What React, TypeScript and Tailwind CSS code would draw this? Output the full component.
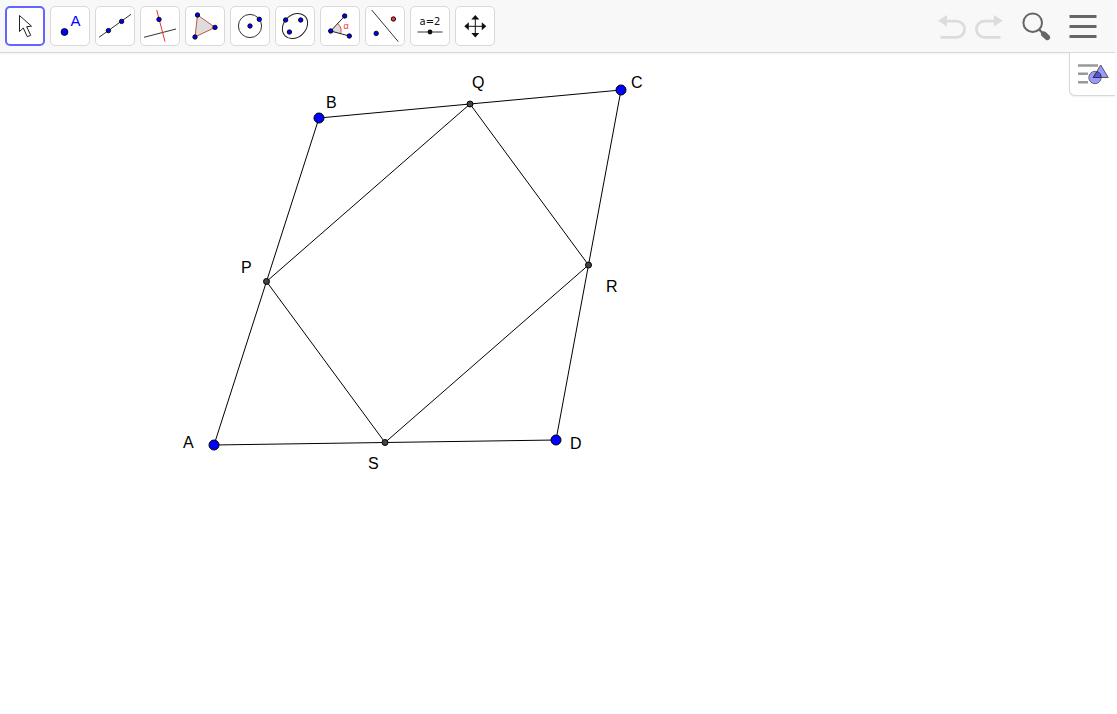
import type { ReactNode } from "react";

function Dot({ x, y, r = 2.2, fill = "#0000ff" }: { x: number; y: number; r?: number; fill?: string }) {
  return <circle cx={x} cy={y} r={r} fill={fill} stroke="#000" strokeWidth="0.9" />;
}

const tools: { name: string; icon: ReactNode }[] = [
  {
    name: "Move",
    icon: <path d="M14.5 9.5V25.5L18.3 22L22.3 30.7L25.7 29.3L21.7 20.7L26.5 20.2Z" fill="#fff" stroke="#222" />,
  },
  {
    name: "Point",
    icon: (
      <>
        <Dot x={14.5} y={26} r={3.4} />
        <text x="25.5" y="20" textAnchor="middle" fontSize="15" fill="#0000ff">A</text>
      </>
    ),
  },
  {
    name: "Line",
    icon: (
      <>
        <path d="M4 31.3L36 8.3" stroke="#333" />
        <Dot x={13.4} y={24.6} />
        <Dot x={26.6} y={15.4} />
      </>
    ),
  },
  {
    name: "Perpendicular line",
    icon: (
      <>
        <path d="M4 31.3L36 23" stroke="#333" />
        <path d="M16.7 4L25 35.7" stroke="#e33" />
        <Dot x={19} y={13.4} />
      </>
    ),
  },
  {
    name: "Polygon",
    icon: (
      <>
        <path d="M12.5 9L30 21.4L10 31Z" fill="#ddd" stroke="#c0583f" />
        <Dot x={12.5} y={9} />
        <Dot x={30} y={21.4} />
        <Dot x={10} y={31} />
      </>
    ),
  },
  {
    name: "Circle with center through point",
    icon: (
      <>
        <circle cx="20" cy="20" r="11.6" stroke="#333" />
        <Dot x={20} y={20} />
        <Dot x={29.3} y={13.3} />
      </>
    ),
  },
  {
    name: "Ellipse",
    icon: (
      <>
        <ellipse cx="20" cy="20" rx="14" ry="11" transform="rotate(-45 20 20)" stroke="#222" />
        <Dot x={10.6} y={14} />
        <Dot x={25.7} y={14} />
        <Dot x={14.4} y={26} />
      </>
    ),
  },
  {
    name: "Angle",
    icon: (
      <>
        <path d="M10.7 25L17.7 17.4A10.3 10.3 0 0 1 20.7 27.6Z" fill="#ddd" />
        <path d="M17.7 17.4A10.3 10.3 0 0 1 20.7 27.6" stroke="#e44" />
        <path d="M24.7 10L10.7 25L29.3 30" stroke="#222" />
        <Dot x={10.7} y={25} />
        <Dot x={24.7} y={10} />
        <Dot x={29.3} y={30} />
        <text x="26" y="23" textAnchor="middle" fontSize="9" fill="#e33">α</text>
      </>
    ),
  },
  {
    name: "Reflect about line",
    icon: (
      <>
        <path d="M6.7 4L33.3 35.7" stroke="#333" />
        <Dot x={28.4} y={13} fill="#ff3333" />
        <Dot x={11.2} y={27.4} />
      </>
    ),
  },
  {
    name: "Slider",
    icon: (
      <>
        <text x="20" y="19" textAnchor="middle" fontSize="10" fill="#111" className="font-['DejaVu_Sans',sans-serif]">a=2</text>
        <path d="M7.5 26H32.5" stroke="#555" strokeWidth="1.2" />
        <circle cx="20" cy="26" r="2.4" fill="#111" />
      </>
    ),
  },
  {
    name: "Move graphics view",
    icon: (
      <>
        <path d="M20.3 11V29M11 20.3H30" stroke="#111" />
        <path d="M20.3 9L24.3 13.5H16.3ZM20.3 31.5L24.3 27H16.3ZM9.3 20.3L13.8 16.3V24.3ZM31.3 20.3L26.8 16.3V24.3Z" fill="#111" />
      </>
    ),
  },
];

type Pt = { name: string; x: number; y: number; lx: number; ly: number };

const vertices: Pt[] = [
  { name: "A", x: 214, y: 445, lx: 183, ly: 448 },
  { name: "B", x: 319, y: 118, lx: 326, ly: 108 },
  { name: "C", x: 621, y: 90, lx: 631, ly: 88 },
  { name: "D", x: 556, y: 440, lx: 570, ly: 449 },
];

const midpoints: Pt[] = [
  { name: "P", x: 266.5, y: 281.5, lx: 241, ly: 273 },
  { name: "Q", x: 470, y: 104, lx: 472, ly: 88 },
  { name: "R", x: 588.5, y: 265, lx: 606, ly: 292 },
  { name: "S", x: 385, y: 442.5, lx: 368, ly: 469 },
];

const outline = (pts: Pt[]) => pts.map((p) => `${p.x},${p.y}`).join(" ");

export default function App() {
  return (
    <div className="flex min-h-screen flex-col bg-white pr-0.5 font-['Liberation_Sans',Arial,sans-serif]">
      <header className="flex items-center justify-between border-b border-[#d8d8d8] bg-[#f8f8f8] px-[5px] py-1.5 shadow-[0_1px_2px_rgba(0,0,0,0.06)]">
        <div role="toolbar" aria-label="Tools" className="flex gap-[5px]">
          {tools.map((tool, i) => (
            <button
              key={tool.name}
              type="button"
              aria-label={tool.name}
              aria-pressed={i === 0}
              className={
                i === 0
                  ? "flex size-10 items-center justify-center rounded-[5px] border-2 border-[#6464ff] bg-white"
                  : "flex size-10 items-center justify-center rounded-[5px] border border-[#d9d9d9] bg-white"
              }
            >
              <svg viewBox="2 2 36 36" className="size-9 shrink-0" fill="none">{tool.icon}</svg>
            </button>
          ))}
        </div>
        <div className="flex items-center pr-[11px]">
          <button type="button" aria-label="Undo" className="size-9">
            <svg viewBox="0 0 36 36" className="size-9" fill="none">
              <path d="M11 13.2H21.5A8 8 0 0 1 21.5 29.4H5.5" stroke="#dcdcdc" strokeWidth="2.8" />
              <path d="M3 12.8L12 7V18.5Z" fill="#dcdcdc" />
            </svg>
          </button>
          <button type="button" aria-label="Redo" className="size-9">
            <svg viewBox="0 0 36 36" className="size-9" fill="none">
              <path d="M23 13.2H13.5A8 8 0 0 0 13.5 29.4H29.5" stroke="#dcdcdc" strokeWidth="2.8" />
              <path d="M31.8 12.8L22.8 7V18.5Z" fill="#dcdcdc" />
            </svg>
          </button>
          <button type="button" aria-label="Search" className="ml-2 size-10">
            <svg viewBox="0 0 40 40" className="size-10" fill="none" stroke="#666">
              <circle cx="17.7" cy="16.7" r="9.3" strokeWidth="2" />
              <path d="M24.2 23.5L28.5 28" strokeWidth="2.4" />
              <path d="M28.8 28.2L32.3 31.3" strokeWidth="5.6" strokeLinecap="round" />
            </svg>
          </button>
          <button type="button" aria-label="Menu" className="ml-1 size-10">
            <svg viewBox="0 0 40 40" className="size-10" stroke="#666" strokeWidth="3">
              <path d="M10.5 10.5H37.5M10.5 20.5H37.5M10.5 30.5H37.5" />
            </svg>
          </button>
        </div>
      </header>
      <main className="relative flex-1">
        <svg
          viewBox="0 53 1115 661"
          width="1115"
          height="661"
          className="block max-w-none"
          role="img"
          aria-label="Quadrilateral ABCD with midpoints P, Q, R, S"
        >
          <g fill="none" stroke="#000" strokeWidth="1">
            <polygon points={outline(vertices)} />
            <polygon points={outline(midpoints)} />
          </g>
          {vertices.map((p) => (
            <circle key={p.name} cx={p.x} cy={p.y} r="5" fill="#0000ff" stroke="#000" />
          ))}
          {midpoints.map((p) => (
            <circle key={p.name} cx={p.x} cy={p.y} r="3" fill="#444" stroke="#000" />
          ))}
          {[...vertices, ...midpoints].map((p) => (
            <text key={p.name} x={p.lx} y={p.ly} fontSize="16">{p.name}</text>
          ))}
        </svg>
        <button
          type="button"
          aria-label="Style bar"
          className="absolute top-0 right-0 flex h-[43px] w-[46px] items-center justify-center rounded-bl-md border-b border-l border-[#d8d8d8] bg-white shadow-[0_1px_2px_rgba(0,0,0,0.06)]"
        >
          <svg viewBox="0 3 36 36" className="size-9 shrink-0" fill="none">
            <path d="M3 12.5H23M3 20.7H13M3 29.3H13" stroke="#999" strokeWidth="2.5" />
            <circle cx="20" cy="24.5" r="7.8" fill="#fff" />
            <path d="M25.7 9.5L35 25.5H17Z" fill="#fff" />
            <circle cx="20" cy="24.5" r="6.2" fill="#9999ff" stroke="#666" />
            <path d="M25.7 12L33.2 24.5H18.2Z" fill="#9999ff" stroke="#555" />
            <path d="M22 18.6A6.2 6.2 0 0 1 26.2 24.5H18.2Z" fill="#5555ee" stroke="#333" />
          </svg>
        </button>
      </main>
    </div>
  );
}
